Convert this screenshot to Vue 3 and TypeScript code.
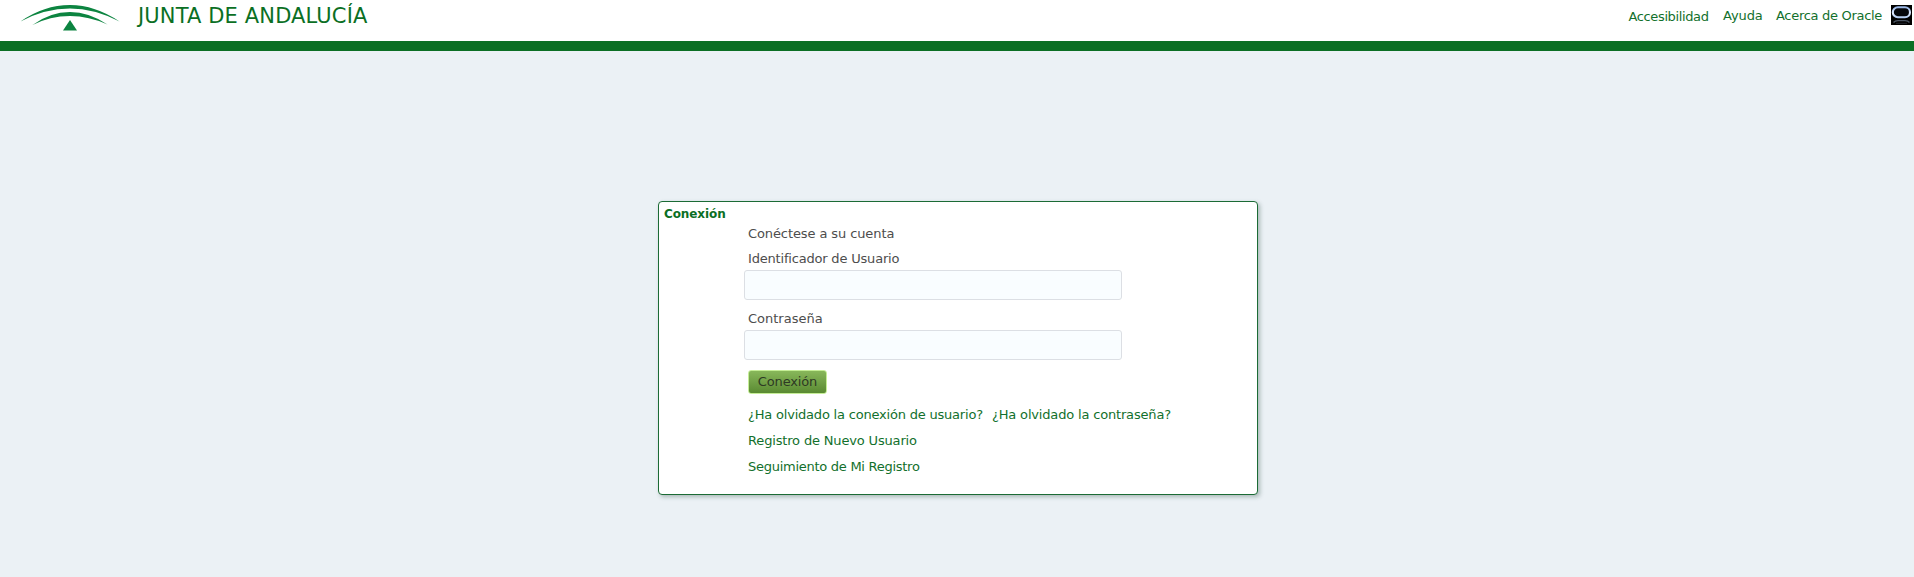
<script setup lang="ts">
import { ref } from 'vue'

const userId = ref('')
const password = ref('')
</script>

<template>
  <div class="page">
    <header class="header">
      <div class="brand">
        <svg class="logo" width="100" height="28" viewBox="0 0 100 28" aria-hidden="true">
          <path d="M0.5 16.5Q24 0 50 0Q75 0 99.5 16.5Q74 3.6 50 3.6Q25 3.6 0.5 16.5Z" fill="#0c8440" />
          <path d="M12.5 20Q30 7 50 7Q69 7 87.5 19.5Q69 11 50 11Q30 11 12.5 20Z" fill="#0c8440" />
          <path d="M50 15L57 25.5H43Z" fill="#0c8440" />
        </svg>
        <span class="brand-name">JUNTA DE ANDALUCÍA</span>
      </div>
      <nav class="nav">
        <a class="link access">Accesibilidad</a>
        <a class="link help">Ayuda</a>
        <a class="link about">Acerca de Oracle</a>
        <svg class="oracle" width="21" height="20" viewBox="0 0 21 20" aria-hidden="true">
          <defs>
            <linearGradient id="shine" x1="0" y1="0" x2="0" y2="1">
              <stop offset="0" stop-color="#9bb8e8" />
              <stop offset="0.6" stop-color="#e2edff" />
              <stop offset="1" stop-color="#b4cdf2" />
            </linearGradient>
          </defs>
          <rect width="21" height="20" fill="#000" />
          <rect x="1.8" y="2.3" width="17.2" height="10" rx="5" fill="#05070c" stroke="url(#shine)" stroke-width="2.1" />
          <path d="M2.5 17.5Q4 15.6 7 15.6H14Q17 15.6 18.5 17.5" fill="none" stroke="#4b5563" stroke-width="1.3" />
          <path d="M5 18.3H16" stroke="#22262e" stroke-width="1" />
        </svg>
      </nav>
    </header>

    <main class="main">
      <section class="panel">
        <h1 class="title">Conexión</h1>
        <form class="form" @submit.prevent>
          <p class="intro">Conéctese a su cuenta</p>
          <label class="label user" for="user-id">Identificador de Usuario</label>
          <input id="user-id" v-model="userId" class="field" type="text" />
          <label class="label pass" for="password">Contraseña</label>
          <input id="password" v-model="password" class="field" type="password" />
          <button class="submit" type="submit">Conexión</button>
          <div class="links">
            <div class="forgot">
              <a class="link forgot-user">¿Ha olvidado la conexión de usuario?</a>
              <a class="link forgot-pass">¿Ha olvidado la contraseña?</a>
            </div>
            <a class="link register">Registro de Nuevo Usuario</a>
            <a class="link track">Seguimiento de Mi Registro</a>
          </div>
        </form>
      </section>
    </main>
  </div>
</template>

<style>
body {
  margin: 0;
  background: #ebf1f5;
}
</style>

<style scoped>
.page {
  display: flex;
  flex-direction: column;
  height: 577px;
  overflow: hidden;
  font: 13px/19px Verdana, 'DejaVu Sans', sans-serif;
  color: #4d4d4d;
}
.header {
  box-sizing: border-box;
  flex: none;
  display: flex;
  justify-content: space-between;
  height: 51px;
  border-bottom: 10px solid #0b6f24;
  background: #fff;
}
.brand {
  display: flex;
  align-items: flex-start;
  padding-left: 20px;
}
.logo {
  margin-top: 5px;
}
.brand-name {
  margin: 2px 0 0 18px;
  font-size: 21px;
  line-height: 28px;
  letter-spacing: 0.13px;
  color: #0b6f24;
}
.nav {
  display: flex;
  align-items: flex-start;
  padding: 6px 2px 0 0;
}
.link {
  color: #12702c;
  white-space: nowrap;
}
.access {
  width: 94.5px;
  margin-top: 1px;
  letter-spacing: -0.37px;
}
.help {
  width: 53px;
  letter-spacing: -0.1px;
}
.about {
  width: 115px;
  letter-spacing: -0.3px;
}
.oracle {
  margin-top: -1px;
}
.main {
  display: flex;
  justify-content: center;
  padding: 150px 0 0 2px;
}
.panel {
  box-sizing: border-box;
  width: 600px;
  height: 294px;
  padding-top: 2px;
  border: 1px solid #1b6b35;
  border-radius: 4px;
  background: #fff;
  box-shadow: 2px 2px 4px rgba(50, 80, 70, 0.35);
}
.title {
  margin: 0 0 0 5px;
  font-size: 12px;
  line-height: 20px;
  letter-spacing: -0.1px;
  color: #0b6f24;
}
.form {
  display: flex;
  flex-direction: column;
  align-items: flex-start;
  margin: 0 0 0 85px;
}
.intro {
  margin: 0 0 6px 4px;
  letter-spacing: -0.1px;
}
.label {
  margin: 0 0 2px 4px;
}
.user {
  letter-spacing: -0.19px;
}
.pass {
  margin-top: 9px;
}
.field {
  box-sizing: border-box;
  width: 378px;
  height: 30px;
  padding: 0 6px;
  border: 1px solid #dcdfe4;
  border-radius: 3px;
  outline: none;
  background: #f9fdff;
  font: inherit;
  color: inherit;
}
.submit {
  box-sizing: border-box;
  width: 79px;
  height: 24px;
  margin: 10px 0 0 4px;
  padding: 0 0 1px;
  border: 1px solid #c5ee96;
  border-radius: 3px;
  background: linear-gradient(#88b75a, #5a8a32);
  font: inherit;
  letter-spacing: -0.15px;
  color: #2e3a24;
}
.links {
  display: flex;
  flex-direction: column;
  gap: 7px;
  margin: 11px 0 0 4px;
}
.forgot {
  display: flex;
}
.forgot-user {
  width: 244px;
  letter-spacing: -0.2px;
}
.forgot-pass {
  letter-spacing: -0.17px;
}
.register {
  letter-spacing: -0.16px;
}
.track {
  letter-spacing: -0.27px;
}
</style>
